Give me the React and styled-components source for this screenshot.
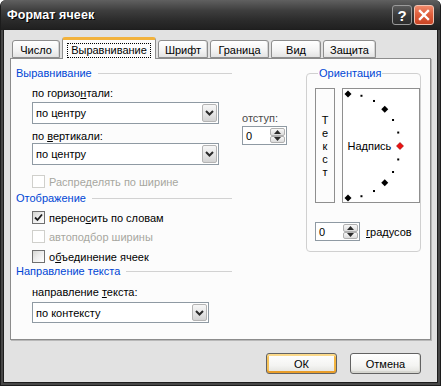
import React from 'react'
import styled, { createGlobalStyle } from 'styled-components'

const GlobalStyle = createGlobalStyle`
  html, body {
    margin: 0;
    padding: 0;
    background: #ffffff;
  }
  body {
    font-family: "Liberation Sans", Arial, sans-serif;
    font-size: 11px;
    color: #000;
  }
`

const Window = styled.div`
  width: 441px;
  height: 386px;
  box-sizing: border-box;
  display: flex;
  flex-direction: column;
  background: #474747;
  border: 1px solid #1c1c1c;
  border-top: none;
  border-radius: 6px 6px 0 0;
  overflow: hidden;
`

const TitleBar = styled.div`
  height: 30px;
  flex: none;
  display: flex;
  align-items: center;
  padding: 0 6px 0 6px;
  background: linear-gradient(#606060 0%, #3e3e3e 35%, #2a2a2a 70%, #1f1f1f 100%);
`

const Title = styled.div`
  flex: 1;
  color: #fff;
  font-weight: bold;
  font-size: 12.5px;
  text-shadow: 1px 1px 0 #000;
  letter-spacing: 0.1px;
`

const TitleButton = styled.div`
  width: 20px;
  height: 20px;
  box-sizing: border-box;
  margin-left: 2px;
  border: 1px solid ${p => (p.$close ? '#f2c2b0' : '#9a9a9a')};
  border-radius: 3px;
  display: flex;
  align-items: center;
  justify-content: center;
  color: #fff;
  font: bold 15px "Liberation Sans", Arial, sans-serif;
  background: ${p =>
    p.$close
      ? 'linear-gradient(#f0896a 0%, #e0603e 45%, #c94424 100%)'
      : 'linear-gradient(#5c5c5c 0%, #3a3a3a 50%, #2c2c2c 100%)'};
`

const Body = styled.div`
  flex: 1;
  margin: 0 3px 3px;
  display: flex;
  flex-direction: column;
  padding: 7px 6px 0 6px;
  background: #e2e2e2;
  box-shadow: 0 0 0 1px #1e1e1e;
`

const TabRow = styled.div`
  height: 21px;
  display: flex;
  align-items: flex-end;
  gap: 2px;
  padding-left: 2px;
`

const Tab = styled.div`
  position: relative;
  z-index: ${p => (p.$active ? 1 : 0)};
  box-sizing: border-box;
  width: ${p => p.$width}px;
  height: ${p => (p.$active ? 22 : 18)}px;
  margin-bottom: ${p => (p.$active ? -1 : 0)}px;
  display: flex;
  align-items: center;
  justify-content: center;
  padding-top: ${p => (p.$active ? 1 : 1)}px;
  border: 1px solid #8e8e8e;
  border-bottom: ${p => (p.$active ? 'none' : '1px solid #8e8e8e')};
  border-top: ${p => (p.$active ? '3px solid #f2b23c' : '1px solid #8e8e8e')};
  border-radius: 3px 3px 0 0;
  background: ${p =>
    p.$active ? '#fcfcfc' : 'linear-gradient(#ffffff 0%, #f3f3f3 60%, #e3e3e3 100%)'};
  box-shadow: ${p => (p.$active ? 'none' : 'inset -1px 0 0 #d4d4d4')};
`

const FocusLabel = styled.span`
  outline: 1px dotted #000;
  padding: 0 3px;
  line-height: 13px;
`

const Panel = styled.div`
  height: 282px;
  box-sizing: border-box;
  border: 1px solid #8c8c8c;
  background: #fcfcfc;
  box-shadow: 1px 1px 0 #b8b8b8;
  padding: 8px 5px 0 5px;
  display: flex;
`

const LeftCol = styled.div`
  width: 290px;
  display: flex;
  flex-direction: column;
`

const SectionHeader = styled.div`
  width: 216px;
  height: 13px;
  line-height: 13px;
  margin-top: ${p => p.$top || 0}px;
  display: flex;
  align-items: center;
  color: #0046d5;
  &::after {
    content: '';
    flex: 1;
    height: 1px;
    margin-left: 6px;
    background: #d2d2d2;
  }
`

const AlignBlock = styled.div`
  display: flex;
  align-items: flex-start;
`

const Fields = styled.div`
  display: flex;
  flex-direction: column;
  padding-left: 16px;
`

const FieldLabel = styled.div`
  height: 13px;
  line-height: 13px;
  margin-top: ${p => p.$top || 0}px;
  color: ${p => p.$color || '#000'};
  white-space: nowrap;
`

const Mn = styled.span`
  text-decoration: underline;
`

const SelectBox = styled.div`
  width: ${p => p.$width}px;
  height: ${p => p.$height || 22}px;
  margin-top: ${p => p.$top || 0}px;
  box-sizing: border-box;
  border: 1px solid #8f9aa3;
  background: #fff;
  display: flex;
  align-items: stretch;
  padding: 1px;
`

const SelectValue = styled.div`
  flex: 1;
  display: flex;
  align-items: center;
  padding-left: 2px;
`

const DropButton = styled.div`
  width: 15px;
  box-sizing: border-box;
  border: 1px solid #b4b4b4;
  border-radius: 2px;
  background: linear-gradient(#f7f7f7 0%, #e6e6e6 55%, #d3d3d3 100%);
  display: flex;
  align-items: center;
  justify-content: center;
`

const IndentBox = styled.div`
  margin: 32px 0 0 23px;
  display: flex;
  flex-direction: column;
`

const SpinBox = styled.div`
  width: 45px;
  height: 19px;
  margin-top: ${p => p.$top || 0}px;
  box-sizing: border-box;
  border: 1px solid #8f9aa3;
  background: #fff;
  display: flex;
  align-items: stretch;
  padding: 1px;
`

const SpinValue = styled.div`
  flex: 1;
  display: flex;
  align-items: center;
  padding-left: 2px;
`

const SpinButtons = styled.div`
  width: 15px;
  display: flex;
  flex-direction: column;
`

const SpinArrow = styled.div`
  flex: 1;
  box-sizing: border-box;
  border: 1px solid #b0b0b0;
  border-radius: 2px;
  background: linear-gradient(#f8f8f8 0%, #dcdcdc 100%);
  display: flex;
  align-items: center;
  justify-content: center;
`

const CheckRow = styled.div`
  height: 13px;
  margin-top: ${p => p.$top || 0}px;
  padding-left: 16px;
  display: flex;
  align-items: center;
  gap: 4px;
  color: ${p => (p.$disabled ? '#a7a7a0' : '#000')};
`

const CheckBox = styled.div`
  width: 13px;
  height: 13px;
  box-sizing: border-box;
  border: 1px solid ${p => (p.$disabled ? '#d0d0cc' : '#6f6f6f')};
  background: ${p =>
    p.$disabled ? '#fff' : 'linear-gradient(135deg, #d6d6d2 0%, #ececec 45%, #ffffff 100%)'};
  display: flex;
  align-items: center;
  justify-content: center;
`

const GroupBox = styled.fieldset`
  width: 115px;
  height: 185px;
  box-sizing: border-box;
  margin: 0 0 0 0;
  padding: 0 0 0 8px;
  border: 1px solid #d0d0d0;
  border-radius: 4px;
  min-inline-size: 0;
`

const Legend = styled.legend`
  margin-left: 3px;
  padding: 0 1px;
  color: #0046d5;
  line-height: 13px;
`

const OrientRow = styled.div`
  margin-top: 8px;
  display: flex;
  gap: 7px;
`

const VerticalText = styled.div`
  width: 23px;
  height: 115px;
  box-sizing: border-box;
  border: 1px solid #8f8f8f;
  display: flex;
  flex-direction: column;
  align-items: center;
  justify-content: center;
  padding-top: 2px;
  line-height: 13px;
`

const Dial = styled.div`
  width: 78px;
  height: 115px;
  box-sizing: border-box;
  border: 1px solid #8f8f8f;
  background: #fff;
  display: flex;
`

const DegreeRow = styled.div`
  margin-top: 19px;
  display: flex;
  align-items: center;
  gap: 6px;
`

const Footer = styled.div`
  margin-top: 13px;
  display: flex;
  justify-content: flex-end;
  gap: 13px;
  padding-right: 10px;
`

const DialogButton = styled.div`
  width: 71px;
  height: 21px;
  box-sizing: border-box;
  border: 1px solid #626262;
  border-radius: 3px;
  display: flex;
  align-items: center;
  justify-content: center;
  background: linear-gradient(#ffffff 0%, #f4f4f2 60%, #e2e2de 100%);
  box-shadow: ${p =>
    p.$default
      ? 'inset 0 2px 0 #fbd98a, inset 0 -2px 0 #e89d2a, inset 2px 0 0 #f6c35a, inset -2px 0 0 #f2b440'
      : 'inset 0 -2px 0 #d6d6d0, inset -1px 0 0 #dcdcd6'};
`

function Chevron() {
  return (
    <svg width="9" height="6" viewBox="0 0 9 6">
      <polyline points="1,1 4.5,4.5 8,1" fill="none" stroke="#2b2b2b" strokeWidth="2" />
    </svg>
  )
}

function Arrow({ up }) {
  return (
    <svg width="7" height="4" viewBox="0 0 7 4">
      <polygon points={up ? '0,4 3.5,0 7,4' : '0,0 3.5,4 7,0'} fill="#2b2b2b" />
    </svg>
  )
}

function Select({ width, height, top, children }) {
  return (
    <SelectBox $width={width} $height={height} $top={top}>
      <SelectValue>{children}</SelectValue>
      <DropButton>
        <Chevron />
      </DropButton>
    </SelectBox>
  )
}

function Spinner({ top, value }) {
  return (
    <SpinBox $top={top}>
      <SpinValue>{value}</SpinValue>
      <SpinButtons>
        <SpinArrow>
          <Arrow up />
        </SpinArrow>
        <SpinArrow>
          <Arrow />
        </SpinArrow>
      </SpinButtons>
    </SpinBox>
  )
}

function Check({ checked, disabled, top, children }) {
  return (
    <CheckRow $top={top} $disabled={disabled}>
      <CheckBox $disabled={disabled}>
        {checked && (
          <svg width="9" height="9" viewBox="0 0 9 9">
            <polyline points="1,4.5 3.5,7 8,1.5" fill="none" stroke="#1e1e1e" strokeWidth="1.8" />
          </svg>
        )}
      </CheckBox>
      <span>{children}</span>
    </CheckRow>
  )
}

function OrientationDial() {
  const cx = 5
  const cy = 57
  const r = 52
  const marks = []
  for (let a = 90; a >= -90; a -= 15) {
    const rad = (a * Math.PI) / 180
    const x = cx + r * Math.cos(rad)
    const y = cy - r * Math.sin(rad)
    if (a % 45 === 0) {
      const s = 3.5
      marks.push(
        <polygon
          key={a}
          points={`${x},${y - s} ${x + s},${y} ${x},${y + s} ${x - s},${y}`}
          fill={a === 0 ? '#ee1111' : '#000'}
          stroke={a === 0 ? '#880000' : 'none'}
          strokeWidth="0.6"
        />
      )
    } else {
      marks.push(<rect key={a} x={x - 1} y={y - 1} width="2" height="2" fill="#000" />)
    }
  }
  return (
    <svg width="76" height="113" viewBox="0 0 76 113">
      {marks}
      <text x="4.5" y="61" fontFamily="Liberation Sans, Arial, sans-serif" fontSize="11" fill="#000">
        Надпись
      </text>
    </svg>
  )
}

const tabs = [
  { label: 'Число', width: 48 },
  { label: 'Выравнивание', width: 94, active: true },
  { label: 'Шрифт', width: 50 },
  { label: 'Граница', width: 59 },
  { label: 'Вид', width: 50 },
  { label: 'Защита', width: 53 },
]

export default function App() {
  return (
    <>
      <GlobalStyle />
      <Window>
        <TitleBar>
          <Title>Формат ячеек</Title>
          <TitleButton>?</TitleButton>
          <TitleButton $close>
            <svg width="12" height="12" viewBox="0 0 12 12">
              <path d="M2 2 L10 10 M10 2 L2 10" stroke="#fff" strokeWidth="2.4" strokeLinecap="square" />
            </svg>
          </TitleButton>
        </TitleBar>
        <Body>
          <TabRow>
            {tabs.map(t => (
              <Tab key={t.label} $width={t.width} $active={t.active}>
                {t.active ? <FocusLabel>{t.label}</FocusLabel> : t.label}
              </Tab>
            ))}
          </TabRow>
          <Panel>
            <LeftCol>
              <SectionHeader>Выравнивание</SectionHeader>
              <AlignBlock>
                <Fields>
                  <FieldLabel $top={7}>
                    по горизо<Mn>н</Mn>тали:
                  </FieldLabel>
                  <Select width={187} top={2}>по центру</Select>
                  <FieldLabel $top={6}>
                    по <Mn>в</Mn>ертикали:
                  </FieldLabel>
                  <Select width={187} top={0}>по центру</Select>
                </Fields>
                <IndentBox>
                  <FieldLabel $color="#4a4a4a">отступ:</FieldLabel>
                  <Spinner top={1} value="0" />
                </IndentBox>
              </AlignBlock>
              <Check top={10} disabled>
                Распределять по ширине
              </Check>
              <SectionHeader $top={4}>Отображение</SectionHeader>
              <Check top={6} checked>
                перено<Mn>с</Mn>ить по словам
              </Check>
              <Check top={6} disabled>
                автоподбор ширины
              </Check>
              <Check top={7}>
                о<Mn>б</Mn>ъединение ячеек
              </Check>
              <SectionHeader $top={2}>Направление текста</SectionHeader>
              <Fields>
                <FieldLabel $top={8}>
                  направление <Mn>т</Mn>екста:
                </FieldLabel>
                <Select width={177} height={21} top={3}>
                  по контексту
                </Select>
              </Fields>
            </LeftCol>
            <GroupBox>
              <Legend>Ориентация</Legend>
              <OrientRow>
                <VerticalText>
                  <span>Т</span>
                  <span>е</span>
                  <span>к</span>
                  <span>с</span>
                  <span>т</span>
                </VerticalText>
                <Dial>
                  <OrientationDial />
                </Dial>
              </OrientRow>
              <DegreeRow>
                <Spinner value="0" />
                <span>
                  <Mn>г</Mn>радусов
                </span>
              </DegreeRow>
            </GroupBox>
          </Panel>
          <Footer>
            <DialogButton $default>ОК</DialogButton>
            <DialogButton>Отмена</DialogButton>
          </Footer>
        </Body>
      </Window>
    </>
  )
}
